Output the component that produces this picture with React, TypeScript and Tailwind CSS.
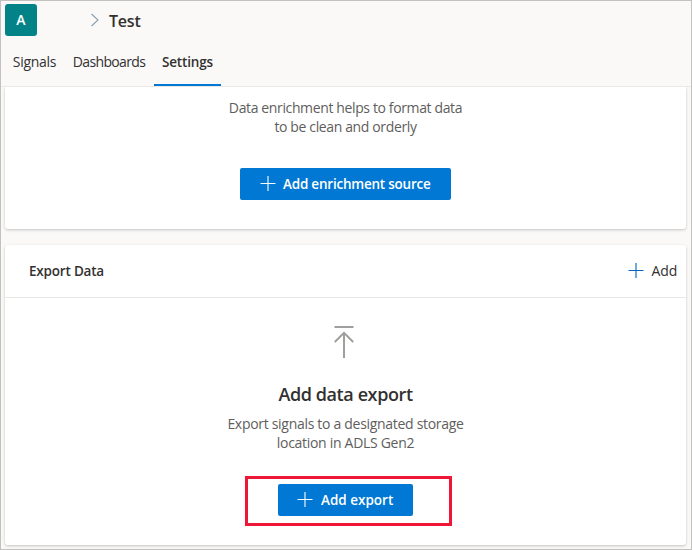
import React from "react";

function Plus({ className }: { className: string }) {
  return (
    <svg className={className} width="16" height="16" viewBox="0 0 16 16" fill="none" stroke="currentColor" strokeWidth="1.1">
      <path d="M0.5 7.5H15.5M8 0V15" />
    </svg>
  );
}

const tabs = [
  { label: "Signals", button: "w-[59px]", text: "tracking-[-0.3px]" },
  { label: "Dashboards", button: "w-[90px]", text: "tracking-[-0.65px]" },
];

export default function App() {
  return (
    <div className="flex h-[550px] w-[692px] flex-col overflow-hidden border border-[#c3c1c0] bg-[#faf9f8] font-['Open_Sans','Noto_Sans',sans-serif] text-[13.5px] text-[#323130]">
      <header className="flex h-[86px] shrink-0 flex-col border-b border-[#e9e8e7]">
        <div className="flex h-[38px] items-center pl-1">
          <div className="flex size-8 items-center justify-center rounded-[3px] bg-[#038387] text-sm font-semibold text-white">A</div>
          <svg className="ml-[53px]" width="10" height="14" viewBox="0 0 10 14" fill="none" stroke="#8ba0b0" strokeWidth="1.1">
            <path d="M1.5 1L8 7L1.5 13" />
          </svg>
          <h1 className="ml-[9px] whitespace-nowrap pt-0.5 text-base font-semibold leading-5 tracking-[-0.2px]">Test</h1>
        </div>
        <nav className="flex h-[47px] pl-[4px] leading-5">
          {tabs.map((tab) => (
            <button key={tab.label} className={`${tab.button} shrink-0 whitespace-nowrap border-b-2 border-transparent text-center text-sm ${tab.text}`}>
              {tab.label}
            </button>
          ))}
          <button className="w-[67px] border-b-2 border-[#0078d4] text-center font-semibold tracking-[-0.15px]">Settings</button>
        </nav>
      </header>
      <main className="flex flex-col px-1">
        <section className="flex h-[142px] w-[681px] flex-col items-center rounded-b-[3px] bg-white pt-[11px] shadow-[0_1px_3px_rgba(0,0,0,0.22)] [clip-path:inset(0_-5px_-6px_-5px)]">
          <p className="text-center text-sm leading-[19px] tracking-[-0.37px] text-[#605e5c]">
            Data enrichment helps to format data
            <br />
            to be clean and orderly
          </p>
          <button className="mt-8 flex h-8 w-[211px] items-center rounded-[2px] bg-[#0078d4] pl-5 font-semibold text-white">
            <Plus className="shrink-0" />
            <span className="ml-[7px] whitespace-nowrap tracking-[-0.22px]">Add enrichment source</span>
          </button>
        </section>
        <section className="mt-4 h-[300px] w-[681px] rounded-[3px] bg-white shadow-[0_1px_3px_rgba(0,0,0,0.22)]">
          <div className="flex h-[53px] items-center justify-between border-b border-[#e9e8e7] pl-6 pr-[9px]">
            <h2 className="font-semibold tracking-[-0.2px]">Export Data</h2>
            <button className="flex items-center">
              <Plus className="text-[#0065bd]" />
              <span className="ml-2 text-sm tracking-[-0.2px]">Add</span>
            </button>
          </div>
          <div className="flex flex-col items-center pt-[27px]">
            <svg className="mr-[3px]" width="22" height="34" viewBox="0 0 22 34" fill="none" stroke="#a19f9d" strokeWidth="2">
              <path d="M1.5 2H20.5M11 33V8M1.8 17L11 7.8L20.2 17" />
            </svg>
            <h3 className="mt-[21px] text-lg font-semibold leading-7 tracking-[-0.4px]">Add data export</h3>
            <p className="mt-[6px] text-center text-sm leading-[19px] tracking-[-0.3px] text-[#605e5c]">
              Export signals to a designated storage
              <br />
              location in ADLS Gen2
            </p>
            <div className="mt-6 ml-[240px] flex h-[50px] w-[207px] self-start border-[3px] border-[#ef1738] pl-[30px] pt-[5px]">
              <button className="flex h-8 w-[135px] items-center rounded-[2px] bg-[#0078d4] pl-[19px] font-semibold text-white">
                <Plus className="shrink-0" />
                <span className="ml-[8px] whitespace-nowrap">Add export</span>
              </button>
            </div>
          </div>
        </section>
      </main>
    </div>
  );
}
